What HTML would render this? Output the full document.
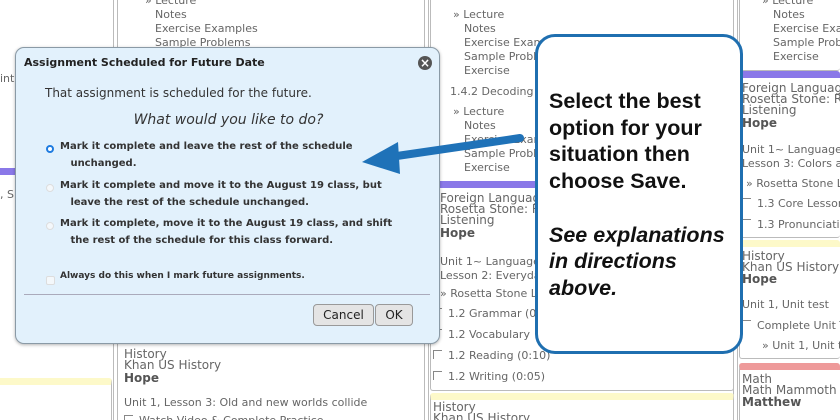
<!DOCTYPE html>
<html><head><meta charset="utf-8"><style>
*{margin:0;padding:0;box-sizing:border-box}
html,body{width:840px;height:420px;overflow:hidden}
body{background:#fff;position:relative;font-family:"DejaVu Sans","Liberation Sans",sans-serif;color:#555}
.a{position:absolute}
.t{position:absolute;font-size:11px;color:#666;white-space:nowrap;line-height:14px}
.box{position:absolute;border:1px solid #bbb;border-radius:3px;background:#fff}
.vl{position:absolute;width:1px;background:#bbb}
.b{font-weight:bold;color:#555;font-size:12px}
.cb{display:inline-block;width:9px;height:9px;border-left:1px solid #888;border-top:1px solid #888;margin-right:6px}
</style></head><body>
<div class="vl" style="left:113px;top:0;height:420px"></div>
<div class="vl" style="left:117px;top:0;height:420px"></div>
<div class="vl" style="left:424px;top:0;height:420px"></div>
<div class="vl" style="left:428px;top:0;height:420px"></div>
<div class="vl" style="left:733px;top:0;height:420px"></div>
<div class="vl" style="left:737px;top:0;height:420px"></div>
<div class="a" style="left:0;top:168px;width:15px;height:7px;background:#8a78e8"></div>
<div class="t" style="left:0;top:72px">int</div>
<div class="t" style="left:0;top:188px">, S</div>
<div class="box" style="left:-5px;top:378px;width:117px;height:50px;border-top:7px solid #fdf9c9"></div>
<div class="t" style="left:145px;top:-6px">» Lecture</div>
<div class="t" style="left:155px;top:8px">Notes</div>
<div class="t" style="left:155px;top:22px">Exercise Examples</div>
<div class="t" style="left:155px;top:36px">Sample Problems</div>
<div class="t" style="left:124px;top:349px;font-size:12px;line-height:11px">History<br>Khan US History</div>
<div class="t b" style="left:124px;top:371px">Hope</div>
<div class="t" style="left:124px;top:396px">Unit 1, Lesson 3: Old and new worlds collide</div>
<div class="t" style="left:124px;top:414px"><span class="cb"></span>Watch Video &amp; Complete Practice</div>
<div class="box" style="left:430px;top:-4px;width:304px;height:190px;border-bottom:none"></div>
<div class="t" style="left:453px;top:8px">» Lecture</div>
<div class="t" style="left:464px;top:22px">Notes</div>
<div class="t" style="left:464px;top:36px">Exercise Examples</div>
<div class="t" style="left:464px;top:50px">Sample Problems</div>
<div class="t" style="left:464px;top:64px">Exercise</div>
<div class="t" style="left:450px;top:85px">1.4.2 Decoding</div>
<div class="t" style="left:453px;top:105px">» Lecture</div>
<div class="t" style="left:464px;top:119px">Notes</div>
<div class="t" style="left:464px;top:133px">Exercise Examples</div>
<div class="t" style="left:464px;top:147px">Sample Problems</div>
<div class="t" style="left:464px;top:161px">Exercise</div>
<div class="box" style="left:430px;top:181px;width:304px;height:210px;border-top:7px solid #8a78e8"></div>
<div class="t" style="left:440px;top:193px;font-size:12px;line-height:11px">Foreign Language<br>Rosetta Stone: Reading<br>Listening</div>
<div class="t b" style="left:440px;top:226px">Hope</div>
<div class="t" style="left:440px;top:255px">Unit 1~ Language Basics<br>Lesson 2: Everyday</div>
<div class="t" style="left:440px;top:287px">» Rosetta Stone Lessons</div>
<div class="t" style="left:433px;top:307px"><span class="cb"></span>1.2 Grammar (0:10)</div>
<div class="t" style="left:433px;top:328px"><span class="cb"></span>1.2 Vocabulary</div>
<div class="t" style="left:433px;top:349px"><span class="cb"></span>1.2 Reading (0:10)</div>
<div class="t" style="left:433px;top:370px"><span class="cb"></span>1.2 Writing (0:05)</div>
<div class="box" style="left:430px;top:393px;width:304px;height:40px;border-top:7px solid #fdf9c9"></div>
<div class="t" style="left:433px;top:402px;font-size:12px;line-height:11px">History<br>Khan US History</div>
<div class="box" style="left:739px;top:-4px;width:101px;height:75px;border-right:none"></div>
<div class="t" style="left:762px;top:-6px">» Lecture</div>
<div class="t" style="left:773px;top:8px">Notes</div>
<div class="t" style="left:773px;top:22px">Exercise Examples</div>
<div class="t" style="left:773px;top:36px">Sample Problems</div>
<div class="t" style="left:773px;top:50px">Exercise</div>
<div class="box" style="left:739px;top:71px;width:101px;height:167px;border-top:7px solid #8a78e8;border-right:none"></div>
<div class="t" style="left:742px;top:83px;font-size:12px;line-height:11px">Foreign Language<br>Rosetta Stone: Reading<br>Listening</div>
<div class="t b" style="left:742px;top:116px">Hope</div>
<div class="t" style="left:742px;top:143px">Unit 1~ Language<br>Lesson 3: Colors and</div>
<div class="t" style="left:746px;top:177px">» Rosetta Stone Lessons</div>
<div class="t" style="left:742px;top:197px"><span class="cb"></span>1.3 Core Lesson</div>
<div class="t" style="left:742px;top:218px"><span class="cb"></span>1.3 Pronunciation</div>
<div class="box" style="left:739px;top:240px;width:101px;height:119px;border-top:7px solid #fdf9c9;border-right:none"></div>
<div class="t" style="left:742px;top:251px;font-size:12px;line-height:11px">History<br>Khan US History</div>
<div class="t b" style="left:742px;top:272px">Hope</div>
<div class="t" style="left:742px;top:298px">Unit 1, Unit test</div>
<div class="t" style="left:742px;top:319px"><span class="cb"></span>Complete Unit Test</div>
<div class="t" style="left:762px;top:339px">» Unit 1, Unit test</div>
<div class="box" style="left:739px;top:363px;width:101px;height:70px;border-top:7px solid #ee9a9a;border-right:none"></div>
<div class="t" style="left:742px;top:374px;font-size:12px;line-height:11px">Math<br>Math Mammoth Grade</div>
<div class="t b" style="left:742px;top:395px">Matthew</div>

<div class="a" style="left:15px;top:47px;width:425px;height:297px;background:#e2f1fc;border:1px solid #8a9aa6;border-radius:9px;box-shadow:0 1px 3px rgba(0,0,0,.3)">
 <div class="a" style="left:8px;top:8px;font-size:11px;font-weight:bold;color:#222">Assignment Scheduled for Future Date</div>
 <div class="a" style="left:402px;top:8px;width:14px;height:14px;border-radius:50%;background:#555;color:#fff;font-size:12px;line-height:14px;text-align:center;font-weight:bold">×</div>
 <div class="a" style="left:29px;top:38px;font-size:12px;color:#333">That assignment is scheduled for the future.</div>
 <div class="a" style="left:0;width:425px;top:64px;text-align:center;font-size:14px;font-style:italic;color:#333">What would you like to do?</div>
 <div class="a" style="left:30px;top:97px;width:8px;height:8px;border-radius:50%;background:#fff;border:2.5px solid #1e7be0"></div>
 <div class="a" style="left:44px;top:90px;font-size:10px;font-weight:bold;color:#333;line-height:17px;width:340px">Mark it complete and leave the rest of the schedule<br>&nbsp;&nbsp;&nbsp;unchanged.</div>
 <div class="a" style="left:30px;top:136px;width:8px;height:8px;border-radius:50%;background:#f4f8fb;border:1px solid #ddd"></div>
 <div class="a" style="left:44px;top:129px;font-size:10px;font-weight:bold;color:#333;line-height:17px;width:380px">Mark it complete and move it to the August 19 class, but<br>&nbsp;&nbsp;&nbsp;leave the rest of the schedule unchanged.</div>
 <div class="a" style="left:30px;top:174px;width:8px;height:8px;border-radius:50%;background:#f4f8fb;border:1px solid #ddd"></div>
 <div class="a" style="left:44px;top:167px;font-size:10px;font-weight:bold;color:#333;line-height:17px;width:380px">Mark it complete, move it to the August 19 class, and shift<br>&nbsp;&nbsp;&nbsp;the rest of the schedule for this class forward.</div>
 <div class="a" style="left:30px;top:228px;width:9px;height:9px;border-radius:2px;background:#f4f8fb;border:1px solid #ddd"></div>
 <div class="a" style="left:44px;top:223px;font-size:9px;font-weight:bold;color:#333">Always do this when I mark future assignments.</div>
 <div class="a" style="left:8px;top:246px;width:406px;height:1px;background:#aab"></div>
 <div class="a" style="left:297px;top:256px;width:61px;height:22px;border:1px solid #999;border-radius:4px;background:#e4e4e4;font-size:12px;color:#222;text-align:center;line-height:20px">Cancel</div>
 <div class="a" style="left:359px;top:256px;width:38px;height:22px;border:1px solid #999;border-radius:4px;background:#e4e4e4;font-size:12px;color:#222;text-align:center;line-height:20px">OK</div>
</div>

<svg class="a" style="left:0;top:0" width="840" height="420">
 <line x1="520" y1="138" x2="390" y2="157" stroke="#1f72b8" stroke-width="8" stroke-linecap="round"/>
 <polygon points="362,162 398,142 400,174" fill="#1f72b8"/>
</svg>

<div class="a" style="left:535px;top:34px;width:208px;height:320px;background:#fff;border:3px solid #1f6fb0;border-radius:20px;font-family:'Liberation Sans',sans-serif;font-weight:bold;color:#111;font-size:21.5px;line-height:26.7px;padding:51px 0 0 11px;white-space:nowrap">
Select the best<br>option for your<br>situation then<br>choose Save.<br><br><i>See explanations<br>in directions<br>above.</i>
</div>
</body></html>
